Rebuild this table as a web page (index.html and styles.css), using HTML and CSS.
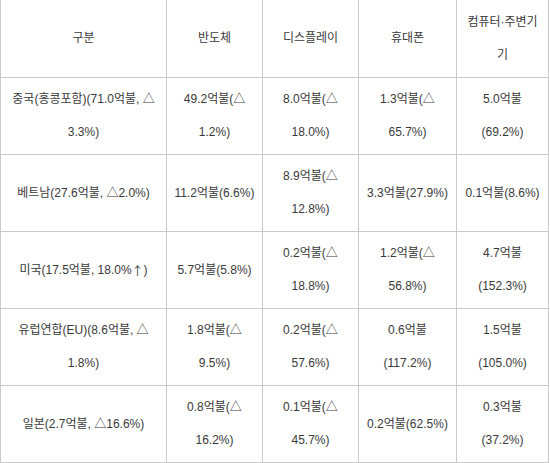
FILE: index.html
```html
<!DOCTYPE html>
<html lang="ko">
<head>
<meta charset="utf-8">
<title>수출 현황</title>
<link rel="stylesheet" href="styles.css">
</head>
<body>
<div class="grid">
  <div class="cell head">구분</div>
  <div class="cell head">반도체</div>
  <div class="cell head">디스플레이</div>
  <div class="cell head">휴대폰</div>
  <div class="cell head">컴퓨터·주변기<br>기</div>

  <div class="cell">중국(홍콩포함)(71.0억불, △<br>3.3%)</div>
  <div class="cell">49.2억불(△<br>1.2%)</div>
  <div class="cell">8.0억불(△<br>18.0%)</div>
  <div class="cell">1.3억불(△<br>65.7%)</div>
  <div class="cell">5.0억불<br>(69.2%)</div>

  <div class="cell">베트남(27.6억불, △2.0%)</div>
  <div class="cell">11.2억불(6.6%)</div>
  <div class="cell">8.9억불(△<br>12.8%)</div>
  <div class="cell">3.3억불(27.9%)</div>
  <div class="cell">0.1억불(8.6%)</div>

  <div class="cell">미국(17.5억불, 18.0%<span class="arrow">↑</span>)</div>
  <div class="cell">5.7억불(5.8%)</div>
  <div class="cell">0.2억불(△<br>18.8%)</div>
  <div class="cell">1.2억불(△<br>56.8%)</div>
  <div class="cell">4.7억불<br>(152.3%)</div>

  <div class="cell">유럽연합(EU)(8.6억불, △<br>1.8%)</div>
  <div class="cell">1.8억불(△<br>9.5%)</div>
  <div class="cell">0.2억불(△<br>57.6%)</div>
  <div class="cell">0.6억불<br>(117.2%)</div>
  <div class="cell">1.5억불<br>(105.0%)</div>

  <div class="cell">일본(2.7억불, △16.6%)</div>
  <div class="cell">0.8억불(△<br>16.2%)</div>
  <div class="cell">0.1억불(△<br>45.7%)</div>
  <div class="cell">0.2억불(62.5%)</div>
  <div class="cell">0.3억불<br>(37.2%)</div>
</div>
</body>
</html>
```

FILE: styles.css
```css
html, body {
  margin: 0;
  padding: 0;
  background: #ffffff;
}

.grid {
  display: grid;
  grid-template-columns: 165px 95px 95px 97px 91px;
  grid-template-rows: 77px repeat(5, 76px);
  gap: 1px;
  width: 549px;
  box-sizing: border-box;
  padding: 0 1px 1px 1px;
  background: #cacaca;
  font-family: "Liberation Sans", "Noto Sans CJK KR", sans-serif;
  font-size: 12px;
  line-height: 33px;
  color: #3a3a3a;
}

.cell {
  background: #ffffff;
  display: flex;
  align-items: center;
  justify-content: center;
  text-align: center;
  white-space: nowrap;
}

.arrow {
  font-family: "Noto Sans CJK KR", sans-serif;
}
```
